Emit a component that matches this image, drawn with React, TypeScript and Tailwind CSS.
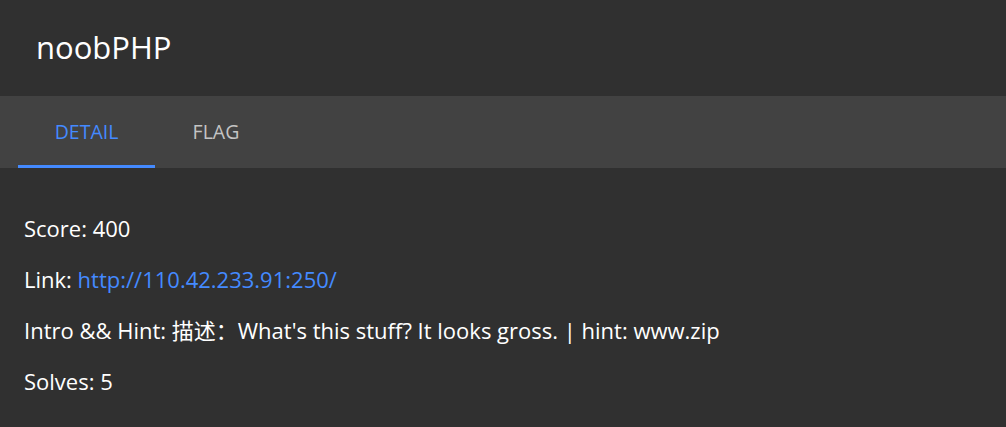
const font = { fontFamily: '"Open Sans", "Noto Sans CJK SC", sans-serif' }

const rows = [
  { label: "Score:", value: "400" },
  { label: "Link:", value: "http://110.42.233.91:250/", link: true },
  { label: "Intro && Hint:", value: "描述：What's this stuff? It looks gross. | hint: www.zip" },
  { label: "Solves:", value: "5" },
]

export default function App() {
  return (
    <div className="w-[1006px] h-[427px] bg-[#303030] text-white" style={font}>
      {/* header */}
      <div className="h-[96px] flex items-center pl-[36px] pb-[2px]">
        <h1 className="text-[31px] leading-none">noobPHP</h1>
      </div>

      {/* tabs */}
      <div className="h-[72px] bg-[#424242] pl-[18px] flex">
        <button className="relative w-[137px] h-full flex items-center justify-center text-[19.5px] text-[#448aff]">
          DETAIL
          <span className="absolute left-0 right-0 bottom-0 h-[3px] bg-[#448aff]" />
        </button>
        <button className="w-[122px] h-full flex items-center justify-center text-[19.5px] text-[#c4c4c4]">
          FLAG
        </button>
      </div>

      {/* detail */}
      <div className="px-[24px] pt-[49px] flex flex-col gap-[29px] text-[22px] leading-[22px]">
        {rows.map((r) => (
          <p key={r.label}>
            {r.label}{" "}
            {r.link ? (
              <a href={r.value} className="text-[#448aff]">{r.value}</a>
            ) : (
              r.value
            )}
          </p>
        ))}
      </div>
    </div>
  )
}
